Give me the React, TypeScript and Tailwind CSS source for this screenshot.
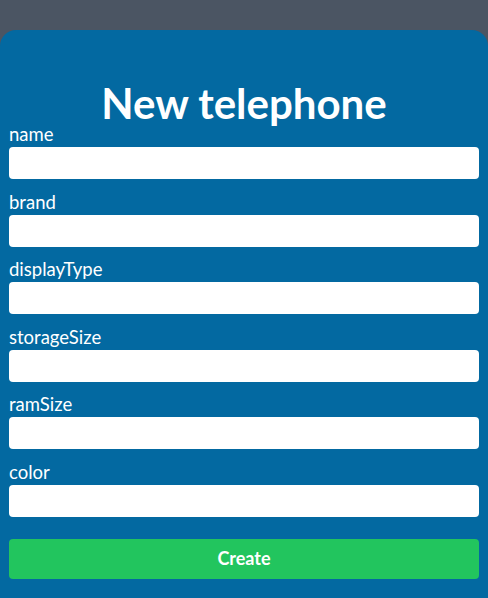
import React from 'react';

const fields = ['name', 'brand', 'displayType', 'storageSize', 'ramSize', 'color'];

export default function App() {
  return (
    <div className="min-h-screen bg-[#4b5563] pt-[30px] font-['Lato','Open_Sans',sans-serif]">
      <div className="rounded-t-[16px] bg-[#0369a1] px-[9px] pt-[51px] pb-[30px]">
        <h1 className="text-center text-[42px] leading-[44px] font-bold text-white">New telephone</h1>
        <form className="flex flex-col" onSubmit={e => e.preventDefault()}>
          {fields.map(f => (
            <div key={f} className="mb-[13.5px] flex flex-col">
              <label className="h-[22px] text-[18.5px] leading-[19px] text-white">{f}</label>
              <input className="h-[32px] rounded-[4px] bg-white px-2 outline-none" />
            </div>
          ))}
          <button
            type="submit"
            className="mt-[8.5px] h-[40px] rounded-[4px] bg-[#22c55e] text-[18px] font-bold text-white"
          >
            Create
          </button>
        </form>
      </div>
    </div>
  );
}
